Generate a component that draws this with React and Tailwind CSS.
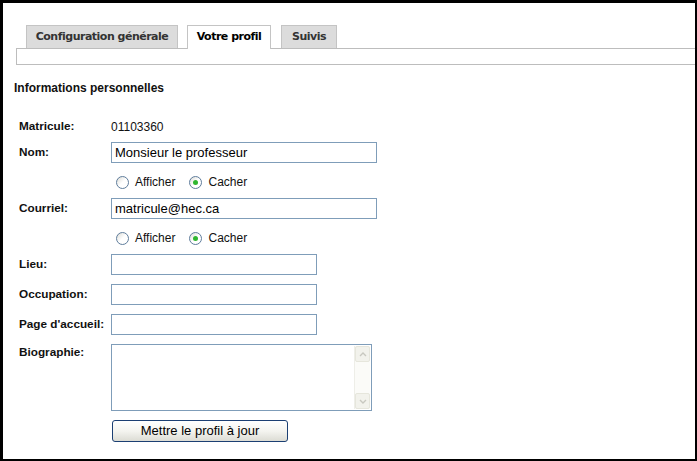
import React from 'react';

const arial = { fontFamily: '"Liberation Sans", Arial, sans-serif' };

function Radio({ checked }) {
  return (
    <span className="flex h-[13px] w-[13px] items-center justify-center rounded-full border border-[#5f7d9c] bg-gradient-to-br from-[#dcdcd6] via-white to-white">
      {checked && <span className="h-[5px] w-[5px] rounded-full bg-[#2fb62f]" />}
    </span>
  );
}

function RadioRow() {
  return (
    <div className="mt-[12px] flex h-[14px] items-center pl-[97px] text-[12px] text-[#111]">
      <Radio />
      <span className="ml-[6px]">Afficher</span>
      <span className="ml-[14px]"><Radio checked /></span>
      <span className="ml-[6px]">Cacher</span>
    </div>
  );
}

function Row({ label, children, first }) {
  return (
    <div className={`${first ? '' : 'mt-[9px]'} flex h-[21px] items-center`}>
      <div className="w-[92px] pb-[2px] text-[11.75px] font-bold text-[#111]">{label}</div>
      {children}
    </div>
  );
}

function Field({ value = '', wide }) {
  return (
    <div
      className={`${wide ? 'w-[266px]' : 'w-[206px]'} flex h-[21px] items-center border border-[#7f9db9] bg-white px-[3px] text-[13px] text-black`}
    >
      {value}
    </div>
  );
}

export default function App() {
  return (
    <div className="h-[461px] w-[697px] overflow-hidden border-[3px] border-r-[2px] border-b-[2px] border-black bg-white" style={arial}>
      {/* tabs */}
      <div className="pl-[13px] pt-[22px]">
        <div className="flex items-end pl-[10px] tracking-[-0.5px]" style={{ fontFamily: '"DejaVu Sans", Verdana, sans-serif' }}>
          <div className="flex h-[23px] w-[152px] items-center justify-center border border-b-0 border-[#c4c4c4] bg-[#dcdcdc] text-[11px] font-bold text-[#333]">
            Configuration générale
          </div>
          <div className="relative z-10 -mb-px ml-[9px] flex h-[24px] w-[84px] items-center justify-center border border-b-0 border-[#c4c4c4] bg-white pb-px text-[11px] font-bold text-black">
            Votre profil
          </div>
          <div className="ml-[10px] flex h-[23px] w-[56px] items-center justify-center border border-b-0 border-[#c4c4c4] bg-[#dcdcdc] text-[11px] font-bold text-[#333]">
            Suivis
          </div>
        </div>
        <div className="h-[17px] border border-r-0 border-[#bdbdbd] bg-white" />
      </div>

      <div className="mt-[16px] pl-[11px] text-[12px] font-bold leading-[14px] text-[#111]">
        Informations personnelles
      </div>

      <div className="mt-[21px] pl-[16px]">
        <Row label="Matricule:" first>
          <span className="text-[12px] text-[#111]">01103360</span>
        </Row>
        <div className="mt-[5px]" />
        <Row label="Nom:" first>
          <Field value="Monsieur le professeur" wide />
        </Row>
        <RadioRow />
        <Row label="Courriel:">
          <Field value="matricule@hec.ca" wide />
        </Row>
        <RadioRow />
        <Row label="Lieu:">
          <Field />
        </Row>
        <Row label="Occupation:">
          <Field />
        </Row>
        <Row label="Page d'accueil:">
          <Field />
        </Row>

        <div className="mt-[9px] flex items-start">
          <div className="w-[92px] pt-[1px] text-[11.75px] font-bold leading-[14px] text-[#111]">Biographie:</div>
          <div className="flex h-[67px] w-[261px] border border-[#7f9db9] bg-white">
            <div className="flex-1" />
            <div className="my-[1px] mr-[1px] flex w-[16px] flex-col justify-between border-l border-[#eeeee8] bg-[#fbfbf8]">
              <div className="flex h-[16px] items-center justify-center rounded-[2px] border border-[#e6e6dc] bg-[#f2f2ec]">
                <svg width="8" height="5" viewBox="0 0 8 5"><path d="M1 4 L4 1 L7 4" fill="none" stroke="#c8c8c0" strokeWidth="1.4" /></svg>
              </div>
              <div className="flex h-[16px] items-center justify-center rounded-[2px] border border-[#e6e6dc] bg-[#f2f2ec]">
                <svg width="8" height="5" viewBox="0 0 8 5"><path d="M1 1 L4 4 L7 1" fill="none" stroke="#c8c8c0" strokeWidth="1.4" /></svg>
              </div>
            </div>
          </div>
        </div>

        <div className="mt-[9px] pl-[93px]">
          <button className="flex h-[22px] w-[176px] items-center justify-center rounded-[3px] border border-[#1b3f73] bg-gradient-to-b from-white via-[#f4f4f0] to-[#dcdcd4] text-[13px] text-black">
            Mettre le profil à jour
          </button>
        </div>
      </div>
    </div>
  );
}
